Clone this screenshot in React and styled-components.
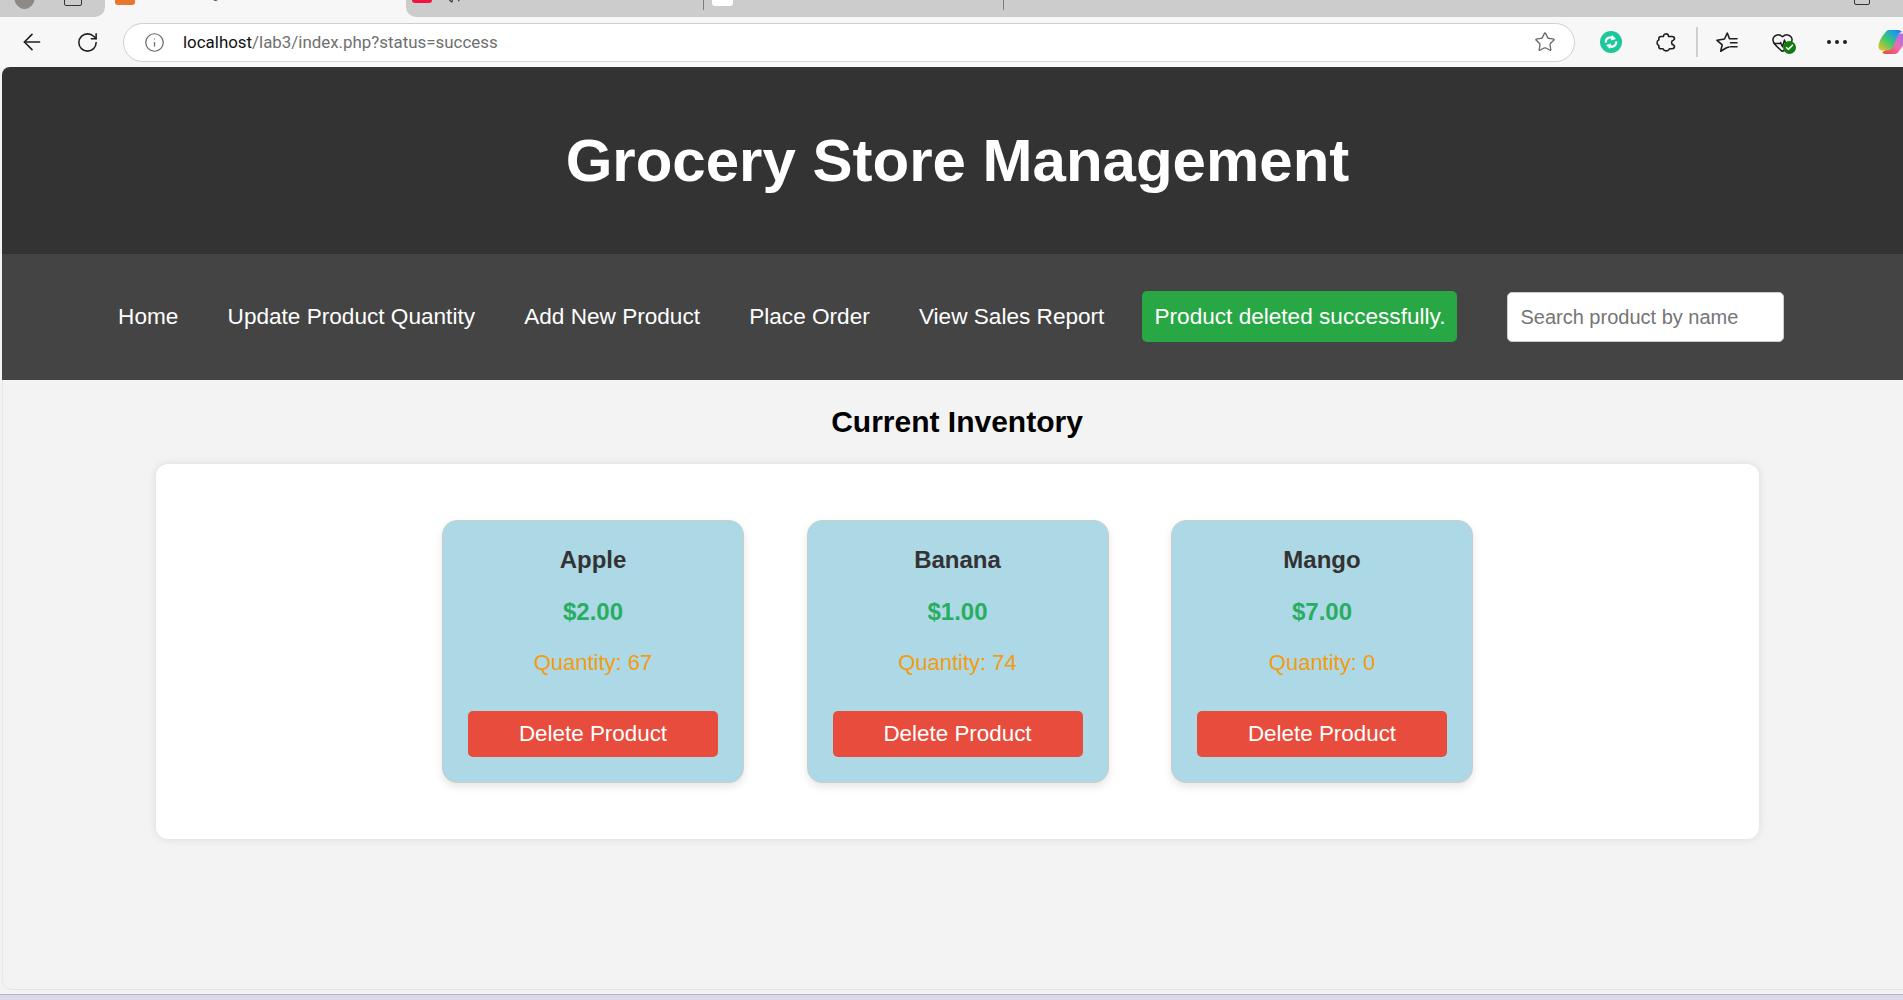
import React from 'react';
import styled, { createGlobalStyle } from 'styled-components';
import { ArrowLeft, RotateCw, Info, Star, HeartPulse, Check, Volume2 } from 'lucide-react';

const GlobalStyle = createGlobalStyle`
	html, body {
		margin: 0;
		padding: 0;
		height: 100%;
		overflow: hidden;
	}
	body {
		font-family: 'Liberation Sans', Arial, sans-serif;
		background: #f3f3f3;
	}
`;

const Screen = styled.div`
	width: 1903px;
	height: 1000px;
	display: flex;
	flex-direction: column;
	overflow: hidden;
	background: #f3f3f3;
`;

const TabStrip = styled.div`
	height: 17px;
	flex-shrink: 0;
	display: flex;
	background: #f7f7f7;
	overflow: hidden;
`;

const StripSegment = styled.div`
	width: ${({ width }) => width};
	flex-grow: ${({ grow }) => (grow ? 1 : 0)};
	background: ${({ active }) => (active ? '#f7f7f7' : '#cccccc')};
	border-radius: ${({ corner }) => corner || '0'};
	position: relative;
	overflow: hidden;
	display: flex;
	align-items: flex-end;
`;

const ClippedMark = styled.span`
	position: absolute;
	left: ${({ left }) => left}px;
	top: ${({ top }) => top}px;
	width: ${({ size }) => size}px;
	height: ${({ tall }) => tall}px;
	background: ${({ color }) => color};
	border-radius: ${({ radius }) => radius || '3px'};
	border: ${({ outline }) => (outline ? '1.5px solid #333' : 'none')};
`;

const ClippedIcon = styled.span`
	position: absolute;
	left: ${({ left }) => left}px;
	top: ${({ top }) => top}px;
	display: flex;
`;

const TabDivider = styled.span`
	position: absolute;
	left: ${({ left }) => left}px;
	top: 0;
	width: 1px;
	height: 10px;
	background: #7d7d7d;
`;

const Toolbar = styled.div`
	height: 50px;
	flex-shrink: 0;
	display: flex;
	align-items: center;
	background: #f7f7f7;
	padding-left: 4.5px;
	color: #1f1f1f;
`;

const ToolButton = styled.div`
	width: 55px;
	height: 40px;
	flex-shrink: 0;
	display: flex;
	align-items: center;
	justify-content: center;
	position: relative;
`;

const AddressBar = styled.div`
	width: 1452px;
	height: 39px;
	flex-shrink: 0;
	box-sizing: border-box;
	margin: 0 8.5px;
	padding: 0 18px 0 20px;
	display: flex;
	align-items: center;
	background: #fff;
	border: 1px solid #cfcfcf;
	border-radius: 20px;
`;

const UrlText = styled.div`
	flex-grow: 1;
	margin-left: 18px;
	font-family: Roboto, 'Liberation Sans', sans-serif;
	font-size: 16.9px;
	color: #6f6f6f;
	white-space: nowrap;
	b {
		font-weight: 400;
		color: #111;
	}
`;

const ToolSeparator = styled.span`
	width: 2px;
	height: 30px;
	margin: 0 2px;
	flex-shrink: 0;
	background: #cfcfcf;
`;

const StatusDot = styled.span`
	position: absolute;
	left: 28.5px;
	top: 18.5px;
	width: 13px;
	height: 13px;
	border-radius: 50%;
	background: #107c10;
	display: flex;
	align-items: center;
	justify-content: center;
	color: #fff;
`;

const Dots = styled.div`
	display: flex;
	gap: 4px;
	span {
		width: 4px;
		height: 4px;
		border-radius: 50%;
		background: #1f1f1f;
	}
`;

const Page = styled.div`
	width: 1911px;
	flex-grow: 1;
	margin-left: 2px;
	display: flex;
	flex-direction: column;
	overflow: hidden;
	border-radius: 8px 0 0 8px;
`;

const Header = styled.header`
	height: 187px;
	flex-shrink: 0;
	display: flex;
	align-items: center;
	justify-content: center;
	background: #333;
`;

const Title = styled.h1`
	margin: 0;
	font-size: 60px;
	font-weight: 700;
	color: #fff;
`;

const Nav = styled.nav`
	height: 126px;
	flex-shrink: 0;
	box-sizing: border-box;
	padding-left: 91.5px;
	display: flex;
	align-items: center;
	background: #444;
	font-size: 22.6px;
`;

const NavLink = styled.a`
	padding: 0 24.6px;
	color: #fff;
	text-decoration: none;
	white-space: nowrap;
`;

const SuccessBadge = styled.div`
	margin: 0 0 1px 13.5px;
	padding: 12px;
	box-sizing: border-box;
	height: 51px;
	display: flex;
	align-items: center;
	color: #fff;
	white-space: nowrap;
	background: #28a745;
	border-radius: 5px;
`;

const SearchInput = styled.input`
	width: 277px;
	height: 50px;
	margin-left: 50px;
	box-sizing: border-box;
	padding: 0 12px;
	font-family: 'Liberation Sans', Arial, sans-serif;
	font-size: 20px;
	border: 1px solid #ccc;
	border-radius: 5px;
	background: #fff;
	&::placeholder {
		color: #757575;
		opacity: 1;
	}
`;

const Main = styled.main`
	flex-grow: 1;
	box-sizing: border-box;
	margin-bottom: 4px;
	padding: 25px 2px 0 0;
	display: flex;
	flex-direction: column;
	align-items: center;
	background: #f3f3f3;
	border-left: 1px solid #e6e6e6;
	border-bottom: 1px solid #e2e2e2;
	border-radius: 0 0 0 10px;
`;

const SectionTitle = styled.h2`
	margin: 0 0 24.5px;
	font-size: 30px;
	line-height: 34.5px;
	font-weight: 700;
	color: #000;
`;

const Inventory = styled.section`
	width: 1603px;
	box-sizing: border-box;
	padding: 56px 0 56px 1px;
	display: flex;
	justify-content: center;
	gap: 62.5px;
	background: #fff;
	border-radius: 12px;
	box-shadow: 0 0 10px rgba(0, 0, 0, 0.1);
`;

const Card = styled.article`
	width: 302px;
	height: 263px;
	box-sizing: border-box;
	padding: 25px 25px 0;
	display: flex;
	flex-direction: column;
	align-items: center;
	background: #add8e6;
	border: 1px solid #ccc;
	border-radius: 15px;
	box-shadow: 0 4px 8px rgba(0, 0, 0, 0.1);
`;

const Name = styled.h3`
	margin: 0;
	font-size: 24px;
	line-height: 28px;
	font-weight: 700;
	color: #333;
`;

const Price = styled.div`
	margin-top: 24px;
	font-size: 24px;
	line-height: 28px;
	font-weight: 700;
	color: #27ae60;
`;

const Quantity = styled.div`
	margin-top: 24px;
	font-size: 22px;
	line-height: 26px;
	color: #f39c12;
`;

const DeleteButton = styled.button`
	width: 250px;
	height: 46px;
	margin-top: 35px;
	font-family: 'Liberation Sans', Arial, sans-serif;
	font-size: 22.4px;
	color: #fff;
	background: #e74c3c;
	border: none;
	border-radius: 5px;
`;

const BottomEdge = styled.div`
	height: 6px;
	flex-shrink: 0;
	background: #dcd9ea;
	border-top: 1px solid #b7b5c3;
	box-sizing: border-box;
`;

const PuzzleIcon = () => (
	<svg width="24" height="24" viewBox="0 0 24 24" fill="none" stroke="#1f1f1f" strokeWidth="1.6" strokeLinejoin="round">
		<path d="M9.5 6.5 C9 3.5 14 2.8 14.5 6 L14.6 6.5 L18 6.5 C19.5 6.5 20.5 7.5 20.5 9 L19.3 10.3 C17 10.6 17 14.6 19.3 14.9 L20.5 16 C20.5 18 19.5 18.8 18 18.8 L15.5 18.8 C14.5 21.5 10 21.5 9 18.8 L6.8 18.8 C5.5 18.8 4.8 18 4.8 16.8 L4.8 15.5 C2.5 15 2.5 10.5 4.8 10 L4.8 8.8 C4.8 7.5 5.5 6.5 7 6.5 Z" />
	</svg>
);

const FavoritesIcon = () => (
	<svg width="24" height="24" viewBox="0 0 24 24" fill="none" stroke="#1f1f1f" strokeWidth="1.6" strokeLinejoin="round" strokeLinecap="round">
		<path d="M14.5 8.7 L12.3 3 L9.5 9 L2 10.3 L7.2 14.8 L5.7 21.3 L11.5 17.8 L14 17" />
		<path d="M15.5 8.7 H22 M15.5 12.7 H22 M15.5 16.7 H22" />
	</svg>
);

const SyncBadge = () => (
	<svg width="24" height="24" viewBox="0 0 24 24">
		<circle cx="12" cy="12" r="11" fill="#1cc79a" />
		<path d="M6.8 12.6 C6.4 9.4 9 7 12 7.4 L14.4 8.4" fill="none" stroke="#fff" strokeWidth="2.2" />
		<path d="M17.2 11.4 C17.6 14.6 15 17 12 16.6 L9.6 15.6" fill="none" stroke="#fff" strokeWidth="2.2" />
		<path d="M13 5 L17 9 L12 10.4 Z M11 19 L7 15 L12 13.6 Z" fill="#fff" />
	</svg>
);

const copilotRibbon = 'M11 1 H20 C22 1 24 2 23.5 3 C21 3.5 20 5.5 19 8 L15 18 C14.2 20 11 21.5 9 21.5 H4 C1.5 21.5 0 19 0.6 16 C1.4 11 5 6 7 4 C8 2 9.5 1 11 1 Z';

const CopilotIcon = () => (
	<svg width="28" height="26" viewBox="0 0 28 26">
		<defs>
			<linearGradient id="copilotLeft" x1="0" y1="1" x2="1" y2="0">
				<stop offset="0" stopColor="#f7c21a" />
				<stop offset="0.45" stopColor="#3ec96e" />
				<stop offset="0.8" stopColor="#1c9be8" />
				<stop offset="1" stopColor="#1f6fe0" />
			</linearGradient>
			<linearGradient id="copilotRight" x1="0" y1="1" x2="1" y2="0">
				<stop offset="0" stopColor="#9a6cf0" />
				<stop offset="0.5" stopColor="#ee6db0" />
				<stop offset="1" stopColor="#e8452c" />
			</linearGradient>
		</defs>
		<path d={copilotRibbon} transform="rotate(180 14 13)" fill="url(#copilotRight)" />
		<path d={copilotRibbon} fill="url(#copilotLeft)" />
	</svg>
);

const BrowserChrome = () => (
	<>
		<TabStrip>
			<StripSegment width="105px" corner="0 0 10px 0">
				<ClippedMark left={14} top={-16} size={21} tall={25} color="#8d8985" radius="50%" />
				<ClippedMark left={64} top={-6} size={16} tall={10} color="#cccccc" radius="2px" outline />
			</StripSegment>
			<StripSegment width="301px" active>
				<ClippedMark left={10} top={-6} size={20} tall={11} color="#e8772e" />
				<ClippedMark left={108} top={-6} size={5} tall={7} color="#555" radius="0 0 3px 3px" />
			</StripSegment>
			<StripSegment grow corner="0 0 0 10px">
				<ClippedMark left={6} top={-6} size={20} tall={9} color="#f0133f" />
				<ClippedIcon left={38} top={-13}>
					<Volume2 size={18} color="#333" strokeWidth={1.5} />
				</ClippedIcon>
				<TabDivider left={297} />
				<ClippedMark left={306} top={-8} size={21} tall={14} color="#ffffff" />
				<TabDivider left={597} />
				<ClippedMark left={1448} top={-6} size={14} tall={9} color="#cccccc" radius="2px" outline />
			</StripSegment>
		</TabStrip>
		<Toolbar>
			<ToolButton><ArrowLeft size={26} strokeWidth={1.5} /></ToolButton>
			<ToolButton><RotateCw size={23} strokeWidth={1.6} /></ToolButton>
			<AddressBar>
				<Info size={21} strokeWidth={1.4} color="#666" />
				<UrlText><b>localhost</b>/lab3/index.php?status=success</UrlText>
				<Star size={22} strokeWidth={1.4} color="#666" />
			</AddressBar>
			<ToolButton><SyncBadge /></ToolButton>
			<ToolButton><PuzzleIcon /></ToolButton>
			<ToolSeparator />
			<ToolButton><FavoritesIcon /></ToolButton>
			<ToolButton>
				<HeartPulse size={23} strokeWidth={1.6} />
				<StatusDot><Check size={9} strokeWidth={4} /></StatusDot>
			</ToolButton>
			<ToolButton><Dots><span /><span /><span /></Dots></ToolButton>
			<ToolButton><CopilotIcon /></ToolButton>
		</Toolbar>
	</>
);

const navItems = ['Home', 'Update Product Quantity', 'Add New Product', 'Place Order', 'View Sales Report'];

const products = [
	{ name: 'Apple', price: '$2.00', quantity: 67 },
	{ name: 'Banana', price: '$1.00', quantity: 74 },
	{ name: 'Mango', price: '$7.00', quantity: 0 },
];

export default function App() {
	return (
		<Screen>
			<GlobalStyle />
			<BrowserChrome />
			<Page>
				<Header>
					<Title>Grocery Store Management</Title>
				</Header>
				<Nav>
					{navItems.map(item => (
						<NavLink key={item} href="#">{item}</NavLink>
					))}
					<SuccessBadge>Product deleted successfully.</SuccessBadge>
					<SearchInput placeholder="Search product by name" />
				</Nav>
				<Main>
					<SectionTitle>Current Inventory</SectionTitle>
					<Inventory>
						{products.map(product => (
							<Card key={product.name}>
								<Name>{product.name}</Name>
								<Price>{product.price}</Price>
								<Quantity>Quantity: {product.quantity}</Quantity>
								<DeleteButton>Delete Product</DeleteButton>
							</Card>
						))}
					</Inventory>
				</Main>
			</Page>
			<BottomEdge />
		</Screen>
	);
}
